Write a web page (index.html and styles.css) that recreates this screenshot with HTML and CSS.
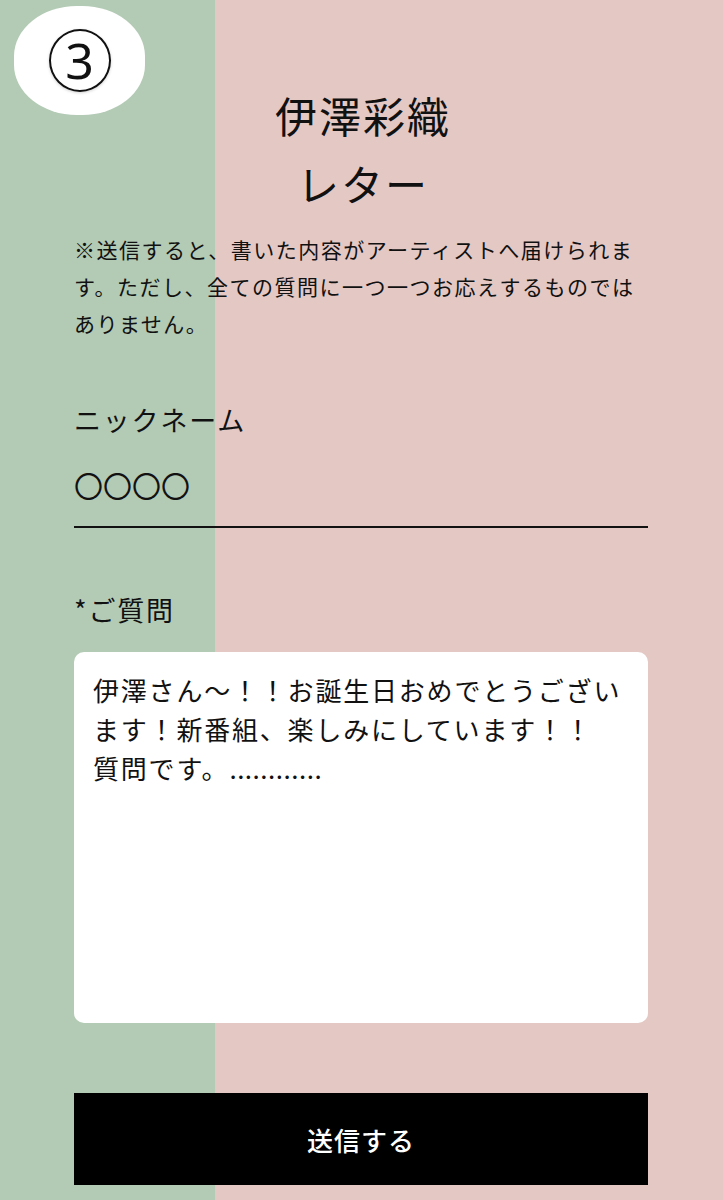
FILE: index.html
```html
<!DOCTYPE html>
<html lang="ja">
<head>
<meta charset="utf-8">
<title>伊澤彩織 レター</title>
<link rel="stylesheet" href="styles.css">
</head>
<body>
<div class="badge"><span class="badge-num">3</span></div>
<main class="page">
  <h1 class="title">伊澤彩織<br>レター</h1>
  <p class="notice">※送信すると、書いた内容がアーティストへ届けられます。ただし、全ての質問に一つ一つお応えするものではありません。</p>
  <div class="label nick-label">ニックネーム</div>
  <div class="nick-value">〇〇〇〇</div>
  <div class="label q-label">*ご質問</div>
  <div class="message">伊澤さん〜！！お誕生日おめでとうございます！新番組、楽しみにしています！！<br>質問です。<span class="dots">............</span></div>
  <button class="submit" type="button">送信する</button>
</main>
</body>
</html>
```
FILE: styles.css
```css
html, body {
  margin: 0;
  padding: 0;
}
body {
  width: 723px;
  min-height: 1200px;
  background: linear-gradient(to right, #b3cab5 0, #b3cab5 215px, #e4c8c4 215px, #e4c8c4 100%);
  font-family: "Noto Sans CJK JP", "Noto Sans", sans-serif;
  color: #111;
  position: relative;
  overflow: hidden;
}
.badge {
  position: absolute;
  top: 6px;
  left: 14px;
  width: 131px;
  height: 109px;
  background: #fff;
  border-radius: 48% / 46%;
  display: flex;
  align-items: center;
  justify-content: center;
}
.badge-num {
  width: 58px;
  height: 58px;
  border: 2.5px solid #111;
  border-radius: 50%;
  display: flex;
  align-items: center;
  justify-content: center;
  font-family: "Noto Sans", "Liberation Sans", sans-serif;
  font-size: 50px;
  line-height: 1;
  color: #111;
  padding-bottom: 1px;
  box-sizing: content-box;
  box-shadow: 0 1px 3px rgba(0,0,0,0.18);
}
.page {
  padding: 81px 75px 0 74px;
}
.title {
  margin: 0;
  font-size: 42px;
  font-weight: 400;
  line-height: 68px;
  letter-spacing: 2px;
  text-align: center;
  padding-left: 4px;
}
.notice {
  margin: 14px 0 0;
  font-size: 21px;
  line-height: 37px;
  letter-spacing: 1.5px;
}
.label {
  font-size: 27px;
  line-height: 40px;
  letter-spacing: 1.8px;
}
.nick-label {
  margin-top: 58px;
}
.nick-value {
  margin-top: 25px;
  font-size: 29px;
  line-height: 40px;
  letter-spacing: 0px;
  padding-bottom: 21px;
  border-bottom: 2px solid #111;
}
.q-label {
  margin-top: 62px;
}
.message {
  margin-top: 22px;
  height: 371px;
  box-sizing: border-box;
  background: #fff;
  border-radius: 10px;
  padding: 18px 19px 0 19px;
  font-size: 26px;
  line-height: 39px;
  letter-spacing: 1.8px;
}
.dots {
  letter-spacing: 0.5px;
}
.submit {
  display: block;
  width: 100%;
  height: 92px;
  margin-top: 70px;
  border: 0;
  background: #000;
  color: #fff;
  font-family: "Noto Sans CJK JP", "Noto Sans", sans-serif;
  font-size: 26px;
  font-weight: 500;
  letter-spacing: 1px;
  padding: 0;
}
```
